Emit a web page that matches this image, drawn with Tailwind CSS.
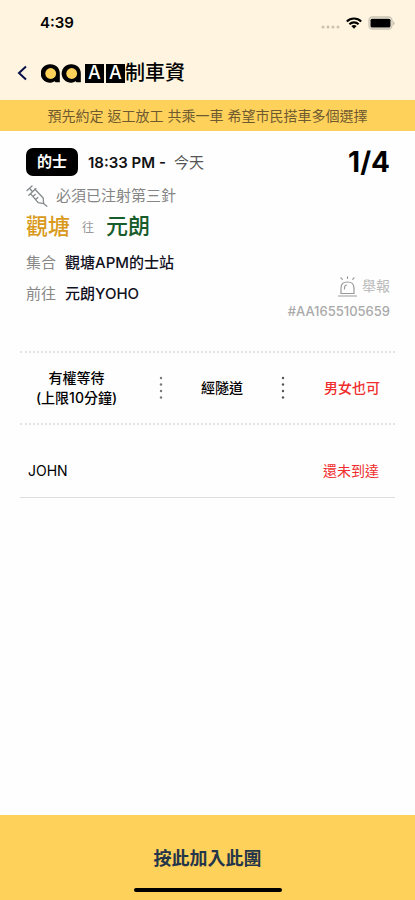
<!DOCTYPE html>
<html lang="zh-Hant">
<head>
<meta charset="utf-8">
<meta name="viewport" content="width=device-width, initial-scale=1">
<title>AA制車資</title>
<script src="https://cdn.jsdelivr.net/npm/@tailwindcss/browser@4"></script>
</head>
<body class="flex min-h-screen flex-col bg-[#fefefe] font-['Inter','Noto_Sans_CJK_TC',sans-serif] text-black">
  <header class="bg-[#fef4df]">
    <div class="flex h-[46px] items-center justify-between pr-5 pl-10">
      <span class="text-[15px] leading-5 font-semibold">4:39</span>
      <div class="flex items-center gap-[6px]">
        <svg class="mt-2 h-1 w-[19px]" viewBox="0 0 19 4" fill="#c9c2b2" aria-hidden="true"><circle cx="2" cy="2" r="1.5"/><circle cx="7" cy="2" r="1.5"/><circle cx="12" cy="2" r="1.5"/><circle cx="17" cy="2" r="1.5"/></svg>
        <svg class="h-3 w-4" viewBox="0 0 16 12" fill="none" stroke="#000" stroke-width="2.1" aria-hidden="true"><path d="M.8 4.4a10.3 10.3 0 0 1 14.4 0M3.4 7.2a6.6 6.6 0 0 1 9.2 0"/><path d="M5.4 9.1a3.8 3.8 0 0 1 5.2 0L8 11.8z" fill="#000" stroke="none"/></svg>
        <svg class="h-[14px] w-[27px]" viewBox="0 0 27 14" aria-hidden="true"><rect x="1" y="1" width="23" height="12" rx="3.5" fill="#fef4df" stroke="#c8c3b4" stroke-width="1.3"/><rect x="2.5" y="2.8" width="20" height="8.6" rx="1.5"/><path d="M25.2 5v4.400q1.300-.8 1.300-2.200T25.200 5z" fill="#bdb8aa"/></svg>
      </div>
    </div>
    <div class="flex h-[54px] items-center pl-4">
      <button type="button" aria-label="返回" class="flex h-8 w-[25px] items-center">
        <svg class="h-4 w-3" viewBox="0 0 12 16" fill="none" stroke="#07104a" stroke-width="2"><path d="M10 1.500 3 8l7 6.500"/></svg>
      </button>
      <svg class="h-[19px] w-10" viewBox="0 0 40 19" aria-hidden="true"><g id="mark"><path d="M9.500.3c5.300 0 9.300 3.800 9.300 9v9h-4.300l-.8-1A9.200 9.200 0 1 1 9.500.3z"/><circle cx="9.700" cy="9.500" r="5.400" fill="#fed15b"/></g><use href="#mark" x="21"/></svg>
      <h1 class="ml-1 flex items-center text-xl leading-7 font-medium">
        <span class="mr-[2px] flex size-[19px] items-center justify-center bg-black text-lg leading-5 font-medium text-white">A</span>
        <span class="flex size-[19px] items-center justify-center bg-black text-lg leading-5 font-medium text-white">A</span>
        <span>制車資</span>
      </h1>
    </div>
    <p class="bg-[#fed15b] pt-[5px] pb-[5px] text-center text-sm leading-[21px] text-[#6f5a30]">預先約定 返工放工 共乘一車 希望市民搭車多個選擇</p>
  </header>

  <main class="flex-1">
    <section class="pt-[15px] pr-[25px] pl-[26px]">
      <div class="flex h-8 items-center">
        <span class="rounded-[7px] bg-black px-[11px] text-[15px] leading-[28px] font-bold text-white">的士</span>
        <p class="ml-[10px] flex gap-2 pt-px text-[15px] leading-6 text-[#555]"><span class="font-semibold text-[#111]">18:33 PM -</span><span>今天</span></p>
        <strong class="ml-auto text-[28px] leading-8 font-bold">1/4</strong>
      </div>
      <div class="flex h-[34px] items-center gap-2 pt-[2px] text-[15px] leading-6 text-[#858585]">
        <svg class="size-[22px]" viewBox="0 0 22 22" fill="none" stroke="#858b8d" stroke-width="1.3" stroke-linecap="round" stroke-linejoin="round" aria-hidden="true"><path d="M1 5.500 6 1M3.500 3.300l3 3.400M2.800 10.200 10 3.600M4.500 8.700l7.600 9 5.500.900-.4-5.600-8.500-9M7 11.500l2.200-2M9.600 14.500l2.200-2M17.600 18.600l3.200 2.700"/></svg>
        <span>必須已注射第三針</span>
      </div>
      <div class="flex h-7 items-center gap-3 leading-7">
        <span class="text-[22px] font-medium text-[#d99a1c]">觀塘</span>
        <span class="pt-1 text-xs text-[#999]">往</span>
        <span class="text-[22px] font-medium text-[#185c2b]">元朗</span>
      </div>
      <div class="flex items-end justify-between pt-[7px]">
        <dl class="text-[15px] leading-[31px]">
          <div class="flex gap-[9px]"><dt class="text-[#888]">集合</dt><dd class="font-medium text-[#111122]">觀塘APM的士站</dd></div>
          <div class="flex gap-[9px]"><dt class="text-[#888]">前往</dt><dd class="font-medium text-[#111122]">元朗YOHO</dd></div>
        </dl>
        <div class="-mb-3 flex flex-col items-end text-[#aaa]">
          <button type="button" class="flex items-center gap-1 text-sm leading-6 text-[#bbb]">
            <svg class="size-[21px]" viewBox="0 0 21 21" fill="none" stroke="#999" stroke-width="1.2" stroke-linecap="round" aria-hidden="true"><path d="M4 17.500V12q0-6 6.500-6t6.500 6v5.500zM1.500 20h18M7.500 13v-1.500q0-2 2-2.500M10.500.8v1.700M4 1.800l1.300 1.500M17 1.800l-1.300 1.500"/></svg>
            <span>舉報</span>
          </button>
          <span class="pt-[3px] text-[13px] leading-5 font-medium">#AA1655105659</span>
        </div>
      </div>
    </section>

    <section class="mx-[20px] mt-[42px] flex h-[74px] items-center border-y-2 border-dotted border-[#e2e2e2] text-sm leading-5 font-medium">
      <p class="w-[113px] shrink-0 text-center">有權等待<br>(上限10分鐘)</p>
      <svg class="ml-[26px] h-6 w-1 shrink-0" viewBox="0 0 4 24" fill="#777" aria-hidden="true"><circle cx="2" cy="2" r="1.200"/><circle cx="2" cy="8.500" r="1.200"/><circle cx="2" cy="15" r="1.200"/><circle cx="2" cy="21.500" r="1.200"/></svg>
      <p class="px-[38px]">經隧道</p>
      <svg class="h-6 w-1 shrink-0" viewBox="0 0 4 24" fill="#555" aria-hidden="true"><circle cx="2" cy="2" r="1.200"/><circle cx="2" cy="8.500" r="1.200"/><circle cx="2" cy="15" r="1.200"/><circle cx="2" cy="21.500" r="1.200"/></svg>
      <p class="mr-[15px] ml-auto text-[#f02d2d]">男女也可</p>
    </section>

    <ul class="mx-[20px] text-sm leading-5">
      <li class="flex items-center justify-between border-b border-[#dedede] pt-[36px] pr-4 pb-4 pl-2"><span>JOHN</span><span class="text-[#f02d2d]">還未到達</span></li>
    </ul>
  </main>

  <footer class="flex flex-col items-center bg-[#fed15b] pb-2">
    <button type="button" class="w-full pt-[30px] pb-[15px] text-center text-lg leading-7 font-bold text-[#25364a]">按此加入此團</button>
    <div class="h-1 w-[148px] rounded-full bg-black"></div>
  </footer>
</body>
</html>
